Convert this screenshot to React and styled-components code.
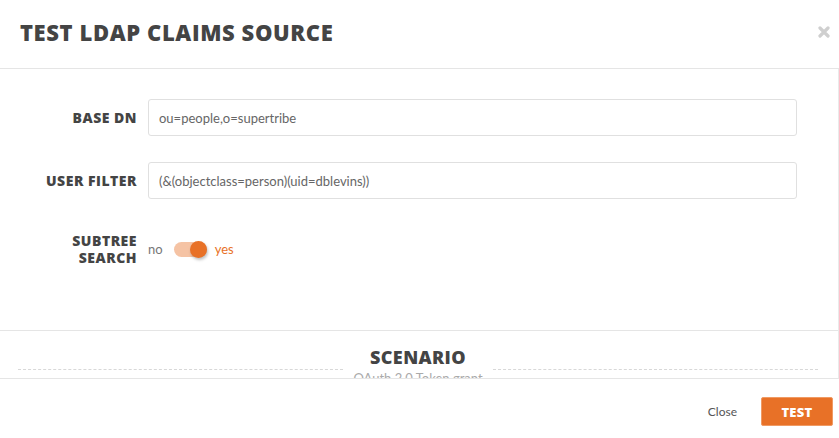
import React, { useState } from 'react';
import styled, { createGlobalStyle } from 'styled-components';

const GlobalStyle = createGlobalStyle`
  html, body {
    margin: 0;
    padding: 0;
    background: #fff;
  }
  body {
    font-family: Lato, "Open Sans", sans-serif;
    color: #444;
  }
  * {
    box-sizing: border-box;
  }
`;

const Modal = styled.div`
  width: 839px;
  height: 438px;
  display: flex;
  flex-direction: column;
  background: #fff;
  overflow: hidden;
`;

const Header = styled.header`
  height: 69px;
  flex: none;
  display: flex;
  align-items: center;
  justify-content: space-between;
  padding: 0 7px 4px 20px;
  border-bottom: 1px solid #e5e5e5;
`;

const Title = styled.h1`
  margin: 0;
  font-family: "Open Sans", sans-serif;
  font-weight: 800;
  font-size: 22px;
  letter-spacing: 0.6px;
  color: #444;
`;

const CloseIcon = styled.button`
  width: 16px;
  height: 16px;
  padding: 0;
  border: none;
  background: none;
  display: flex;
  align-items: center;
  justify-content: center;
  cursor: pointer;
`;

const Body = styled.div`
  height: 310px;
  flex: none;
  overflow: hidden;
  border-right: 1px solid #eaeaea;
  border-bottom: 1px solid #e5e5e5;
`;

const Panel = styled.section`
  padding: 30px 41px 64px 0;
  border-bottom: 1px solid #e5e5e5;
  display: flex;
  flex-direction: column;
  gap: 26px;
`;

const Row = styled.div`
  display: grid;
  grid-template-columns: 137px 1fr;
  column-gap: 11px;
  align-items: center;
  margin-top: ${p => p.$extra || 0}px;
`;

const Label = styled.label`
  text-align: right;
  font-family: "Open Sans", sans-serif;
  font-weight: 800;
  font-size: 14px;
  letter-spacing: 0.5px;
  line-height: 17px;
  color: #444;
`;

const Input = styled.input`
  height: 37px;
  width: 100%;
  padding: 0 10px;
  border: 1px solid #e0e0e0;
  border-radius: 3px;
  font-family: Lato, sans-serif;
  font-size: 13px;
  color: #666;
  outline: none;
`;

const ToggleWrap = styled.div`
  display: flex;
  align-items: center;
  gap: 11px;
  font-family: Lato, sans-serif;
  font-size: 13px;
`;

const Option = styled.span`
  color: ${p => (p.$active ? '#e87127' : '#777')};
  margin-left: ${p => p.$shift || 0}px;
`;

const Track = styled.button`
  position: relative;
  width: 33px;
  height: 15px;
  padding: 0;
  border: none;
  border-radius: 8px;
  background: ${p => (p.$on ? '#f5c3a4' : '#ddd')};
  cursor: pointer;
`;

const Knob = styled.span`
  position: absolute;
  top: -1px;
  left: ${p => (p.$on ? '16px' : '0')};
  width: 17px;
  height: 17px;
  border-radius: 50%;
  background: ${p => (p.$on ? '#e87127' : '#fafafa')};
  box-shadow: 1px 2px 3px rgba(0, 0, 0, 0.25);
`;

const Scenario = styled.section`
  padding: 16px 20px 0 18px;
  text-align: center;
`;

const ScenarioTitle = styled.h2`
  margin: 0;
  font-family: "Open Sans", sans-serif;
  font-weight: 800;
  font-size: 18px;
  letter-spacing: 0.4px;
  line-height: 20px;
  color: #444;
`;

const Divider = styled.div`
  display: flex;
  align-items: flex-start;
  margin-top: 2px;
`;

const Dash = styled.div`
  flex: 1;
  border-top: 1px dashed #d8d8d8;
`;

const Subtitle = styled.span`
  padding: 1px 10px 0;
  font-family: Lato, sans-serif;
  font-size: 13px;
  color: #aaa;
`;

const Footer = styled.footer`
  flex: 1;
  display: flex;
  align-items: center;
  justify-content: flex-end;
  padding: 6px 6px 0 0;
  gap: 12px;
`;

const TextButton = styled.button`
  border: none;
  background: none;
  padding: 6px 12px;
  font-family: Lato, sans-serif;
  font-size: 12px;
  color: #555;
  cursor: pointer;
`;

const PrimaryButton = styled.button`
  width: 72px;
  height: 29px;
  border: 1px solid #f09a63;
  border-radius: 2px;
  background: #e87127;
  color: #fff;
  font-family: "Open Sans", sans-serif;
  font-weight: 800;
  font-size: 13px;
  letter-spacing: 0.3px;
  cursor: pointer;
`;

export default function App() {
  const [baseDn, setBaseDn] = useState('ou=people,o=supertribe');
  const [filter, setFilter] = useState('(&(objectclass=person)(uid=dblevins))');
  const [subtree, setSubtree] = useState(true);

  return (
    <Modal>
      <GlobalStyle />
      <Header>
        <Title>TEST LDAP CLAIMS SOURCE</Title>
        <CloseIcon aria-label="close">
          <svg width="12" height="12" viewBox="0 0 12 12">
            <path d="M2 2L10 10M10 2L2 10" stroke="#cfcfcf" strokeWidth="3.2" strokeLinecap="round" />
          </svg>
        </CloseIcon>
      </Header>
      <Body>
        <Panel>
          <Row>
            <Label>BASE DN</Label>
            <Input value={baseDn} onChange={e => setBaseDn(e.target.value)} />
          </Row>
          <Row>
            <Label>USER FILTER</Label>
            <Input value={filter} onChange={e => setFilter(e.target.value)} />
          </Row>
          <Row $extra={7}>
            <Label>SUBTREE<br />SEARCH</Label>
            <ToggleWrap>
              <Option $active={!subtree}>no</Option>
              <Track $on={subtree} onClick={() => setSubtree(!subtree)}>
                <Knob $on={subtree} />
              </Track>
              <Option $active={subtree} $shift={-3}>yes</Option>
            </ToggleWrap>
          </Row>
        </Panel>
        <Scenario>
          <ScenarioTitle>SCENARIO</ScenarioTitle>
          <Divider>
            <Dash />
            <Subtitle>OAuth 2.0 Token grant</Subtitle>
            <Dash />
          </Divider>
        </Scenario>
      </Body>
      <Footer>
        <TextButton>Close</TextButton>
        <PrimaryButton>TEST</PrimaryButton>
      </Footer>
    </Modal>
  );
}
